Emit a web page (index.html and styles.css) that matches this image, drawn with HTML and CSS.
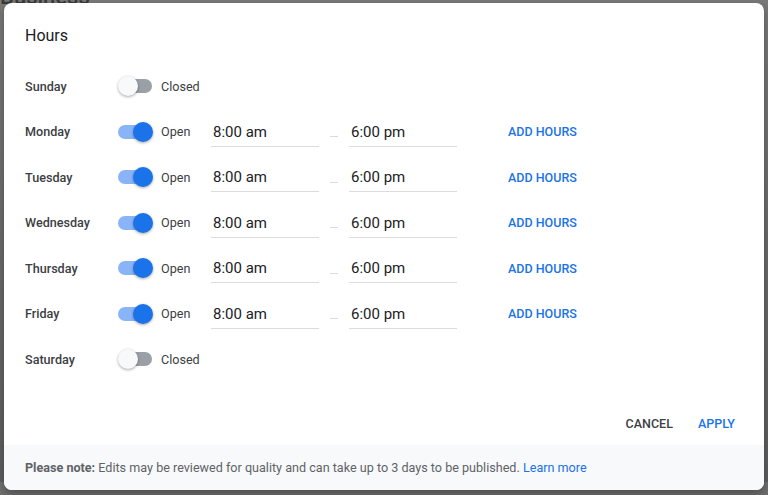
FILE: index.html
```html
<!DOCTYPE html>
<html>
<head>
<meta charset="utf-8">
<link rel="stylesheet" href="styles.css">
</head>
<body>
<div class="page">
  <div class="page-title">Business</div>
</div>
<div class="dialog">
  <h1 class="title">Hours</h1>
  <div class="rows">
    <div class="row">
      <div class="day">Sunday</div>
      <div class="switch off"><span class="track"></span><span class="thumb"></span></div>
      <div class="state">Closed</div>
    </div>
    <div class="row">
      <div class="day">Monday</div>
      <div class="switch on"><span class="track"></span><span class="thumb"></span></div>
      <div class="state">Open</div>
      <div class="time">8:00 am</div><span class="dash"></span><div class="time">6:00 pm</div>
      <a class="add">ADD HOURS</a>
    </div>
    <div class="row">
      <div class="day">Tuesday</div>
      <div class="switch on"><span class="track"></span><span class="thumb"></span></div>
      <div class="state">Open</div>
      <div class="time">8:00 am</div><span class="dash"></span><div class="time">6:00 pm</div>
      <a class="add">ADD HOURS</a>
    </div>
    <div class="row">
      <div class="day">Wednesday</div>
      <div class="switch on"><span class="track"></span><span class="thumb"></span></div>
      <div class="state">Open</div>
      <div class="time">8:00 am</div><span class="dash"></span><div class="time">6:00 pm</div>
      <a class="add">ADD HOURS</a>
    </div>
    <div class="row">
      <div class="day">Thursday</div>
      <div class="switch on"><span class="track"></span><span class="thumb"></span></div>
      <div class="state">Open</div>
      <div class="time">8:00 am</div><span class="dash"></span><div class="time">6:00 pm</div>
      <a class="add">ADD HOURS</a>
    </div>
    <div class="row">
      <div class="day">Friday</div>
      <div class="switch on"><span class="track"></span><span class="thumb"></span></div>
      <div class="state">Open</div>
      <div class="time">8:00 am</div><span class="dash"></span><div class="time">6:00 pm</div>
      <a class="add">ADD HOURS</a>
    </div>
    <div class="row">
      <div class="day">Saturday</div>
      <div class="switch off"><span class="track"></span><span class="thumb"></span></div>
      <div class="state">Closed</div>
    </div>
  </div>
  <div class="actions">
    <button class="btn cancel">CANCEL</button>
    <button class="btn apply">APPLY</button>
  </div>
  <div class="footer">
    <b>Please note:</b> Edits may be reviewed for quality and can take up to 3 days to be published. <a class="learn">Learn more</a>
  </div>
</div>
</body>
</html>
```

FILE: styles.css
```css
html, body {
  margin: 0;
  padding: 0;
  width: 768px;
  height: 495px;
  overflow: hidden;
  font-family: Roboto, "Noto Sans", Arial, sans-serif;
}
body {
  background: #6f6f6f;
  position: relative;
}
.page {
  width: 768px;
  height: 495px;
  background: linear-gradient(#7a7a7a, #5e5e5e);
}
.page-title {
  font-size: 22px;
  color: #3a3a3a;
  margin-top: -13px;
  line-height: 20px;
  font-weight: 500;
}
.dialog {
  position: absolute;
  left: 4px;
  top: 3px;
  width: 760px;
  height: 487px;
  background: #fff;
  border-radius: 8px;
  overflow: hidden;
  display: flex;
  flex-direction: column;
  box-shadow: 0 4px 10px rgba(0,0,0,.3);
}
.title {
  margin: 21px 0 0 21px;
  font-size: 16px;
  line-height: 24px;
  font-weight: 400;
  color: #202124;
}
.rows {
  margin-top: 15.5px;
  padding-left: 21px;
}
.row {
  height: 45.5px;
  display: flex;
  align-items: center;
}
.day {
  width: 93px;
  font-size: 12.6px;
  font-weight: 500;
  color: #3c4043;
}
.switch {
  position: relative;
  width: 34px;
  height: 20px;
  margin-right: 9px;
}
.track {
  position: absolute;
  left: 1px;
  top: 3px;
  width: 33px;
  height: 14px;
  border-radius: 7px;
  background: #9aa0a6;
}
.thumb {
  position: absolute;
  top: 0;
  width: 20px;
  height: 20px;
  border-radius: 50%;
  box-shadow: 0 1px 3px rgba(0,0,0,.35);
}
.off .thumb { left: 0; background: #f8f9fa; }
.on .track { background: #8ab4f8; left: 0; width: 32px; }
.on .thumb { left: 15px; background: #1a73e8; }
.state {
  width: 50px;
  font-size: 12.6px;
  color: #3c4043;
}
.time {
  width: 106px;
  padding-left: 2px;
  height: 28px;
  line-height: 28px;
  font-size: 15px;
  color: #202124;
  border-bottom: 1px solid #dadce0;
  margin-top: 1px;
}
.dash {
  width: 8px;
  height: 1px;
  background: #dadce0;
  margin: 10px 11px 0 11px;
}
.add {
  margin-left: 51px;
  font-size: 12.5px;
  font-weight: 500;
  color: #1a73e8;
}
.actions {
  margin-top: 23px;
  height: 36px;
  display: flex;
  justify-content: flex-end;
  align-items: center;
  padding-right: 21px;
  gap: 9px;
}
.btn {
  background: none;
  border: 0;
  padding: 0 8px;
  height: 36px;
  font-family: Roboto, "Noto Sans", Arial, sans-serif;
  font-size: 12.5px;
  font-weight: 500;
}
.cancel { color: #3c4043; }
.apply { color: #1a73e8; }
.footer {
  margin-top: auto;
  height: 45px;
  line-height: 45px;
  background: #f8f9fa;
  padding-left: 21px;
  font-size: 12.6px;
  color: #5f6368;
  white-space: nowrap;
}
.footer b { font-weight: 700; }
.learn { color: #1a73e8; }
```
